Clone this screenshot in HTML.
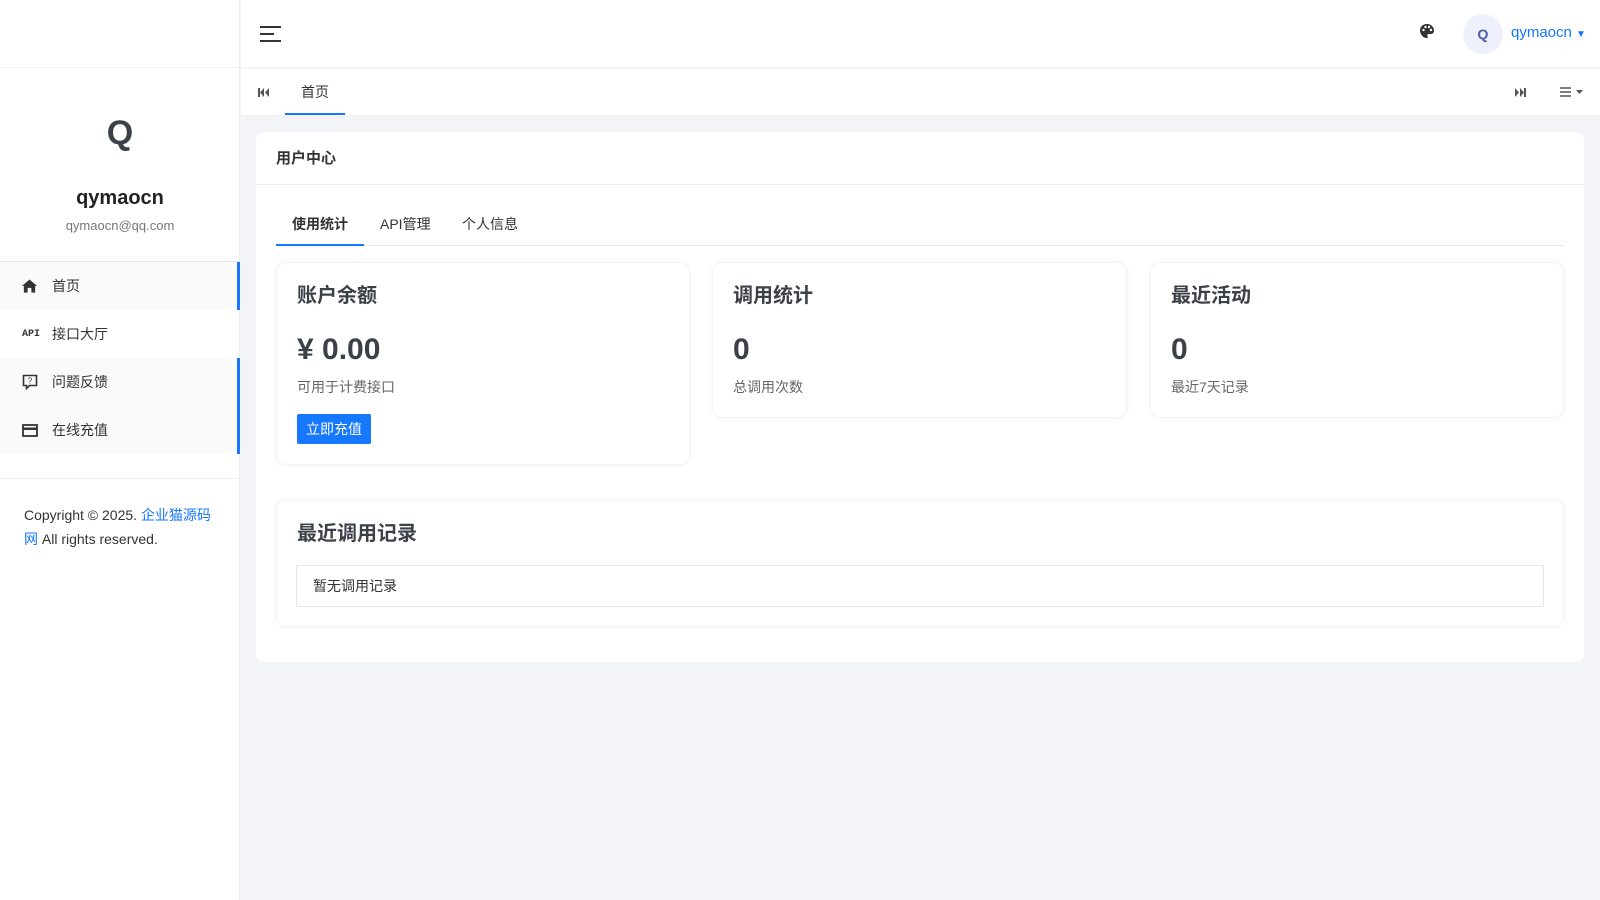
<!DOCTYPE html>
<html><head><meta charset="utf-8"><style>
*{box-sizing:border-box;margin:0;padding:0}
body{width:1600px;height:900px;background:#f3f4f8;font-family:"Liberation Sans","Noto Sans CJK SC",sans-serif;color:#333;position:relative;overflow:hidden}
.side{position:absolute;left:0;top:0;width:240px;height:900px;background:#fff;border-right:1px solid #eceef2}
.side .top{height:68px;border-bottom:1px solid #f3f3f3}
.logo{position:absolute;top:114px;width:240px;text-align:center;font-size:34px;font-weight:bold;color:#3c4049}
.name{position:absolute;top:187px;width:240px;text-align:center;font-size:20px;font-weight:bold;color:#222}
.mail{position:absolute;top:218px;width:240px;text-align:center;font-size:13px;color:#777}
.menu{position:absolute;top:261px;left:0;width:240px;border-top:1px solid #e4e4e4}
.mi{height:48px;display:flex;align-items:center;font-size:14px;color:#333;position:relative}
.mi .ic{width:30px;margin-left:22px;display:flex;align-items:center}
.mi.bar::after{content:"";position:absolute;right:0;top:0;bottom:0;width:3px;background:#1677ff}
.mi.g{background:#fafafb}
.hr2{position:absolute;top:478px;left:0;width:240px;border-top:1px solid #eee}
.copy{position:absolute;top:503px;left:24px;width:200px;font-size:14px;line-height:24px;color:#333}
.copy a{color:#1677ff;text-decoration:none}
.hdr{position:absolute;left:241px;top:0;right:0;height:68px;background:#fff;border-bottom:1px solid #f3f3f3}
.tabs{position:absolute;left:241px;top:69px;right:0;height:46px;background:#fff}
.card{position:absolute;left:256px;top:132px;width:1328px;height:530px;background:#fff;border-radius:8px}
.ch{height:53px;border-bottom:1px solid #eee;padding-left:20px;line-height:53px;font-size:15px;font-weight:bold;color:#333}
.sc{position:absolute;background:#fff;border-radius:10px;box-shadow:0 0 6px rgba(0,0,0,.05);border:1px solid #f4f4f4}
.sc h3{position:absolute;left:20px;top:16px;font-size:20px;color:#3c4049}
.sc .big{position:absolute;left:20px;top:70px;font-size:30px;font-weight:bold;color:#3c4049}
.sc .sub{position:absolute;left:20px;top:114px;font-size:14px;color:#666}
</style></head><body>
<div class="side">
<div class="top"></div>
<div class="logo">Q</div>
<div class="name">qymaocn</div>
<div class="mail">qymaocn@qq.com</div>
<div class="menu">
<div class="mi g bar"><span class="ic"><svg width="15" height="14" viewBox="0 0 16 14"><path d="M8 0L0 7h2v7h4V9h4v5h4V7h2z" fill="#333"/></svg></span>首页</div>
<div class="mi"><span class="ic" style="font-size:10px;font-weight:bold;font-family:'Liberation Mono',monospace">API</span>接口大厅</div>
<div class="mi g bar"><span class="ic"><svg width="16" height="16" viewBox="0 0 16 16"><path d="M1.5 1.5h13v10h-7l-3 3v-3h-3z" fill="none" stroke="#333" stroke-width="1.6"/><text x="8" y="9.5" font-size="8" text-anchor="middle" fill="#333" font-family="Liberation Sans">?</text></svg></span>问题反馈</div>
<div class="mi g bar"><span class="ic"><svg width="16" height="13" viewBox="0 0 16 13"><rect x="1" y="1" width="14" height="11" fill="none" stroke="#333" stroke-width="1.8"/><rect x="1" y="3.5" width="14" height="2.5" fill="#333"/></svg></span>在线充值</div>
</div>
<div class="hr2"></div>
<div class="copy">Copyright © 2025. <a>企业猫源码网</a> All rights reserved.</div>
</div>
<div class="hdr">
<svg style="position:absolute;left:19px;top:26px" width="21" height="16" viewBox="0 0 21 16"><path d="M0 1h21M0 8h14M0 15h21" stroke="#333" stroke-width="2"/></svg>
<svg style="position:absolute;left:1178px;top:23px" width="16" height="16" viewBox="0 0 16 16"><path d="M8 1C3.5 1 1 4 1 7.5S4 15 7.5 15c1.5 0 1.6-1 1-2s0-2 1.5-2H12c2 0 3-1.5 3-3.5C15 4 12 1 8 1z" fill="#333"/><circle cx="4.5" cy="7" r="1.2" fill="#fff"/><circle cx="6.5" cy="4" r="1.2" fill="#fff"/><circle cx="10" cy="4" r="1.2" fill="#fff"/><circle cx="12" cy="7" r="1.2" fill="#fff"/></svg>
<div style="position:absolute;left:1222px;top:14px;width:40px;height:40px;border-radius:50%;background:#eef1fb;color:#4a5aa8;font-weight:bold;font-size:14px;text-align:center;line-height:40px">Q</div>
<div style="position:absolute;left:1270px;top:24px;font-size:15px;color:#1677ff">qymaocn <span style="font-size:10px">▼</span></div>
</div>
<div class="tabs">
<svg style="position:absolute;left:17px;top:19px" width="11" height="9" viewBox="0 0 11 9"><rect x="0" y="0" width="2" height="9" fill="#555"/><path d="M6 0v9L2 4.5zM11 0v9L7 4.5z" fill="#555"/></svg>
<div style="position:absolute;left:44px;top:0;width:60px;height:46px;border-bottom:2px solid #1677ff;text-align:center;line-height:46px;font-size:14px;color:#333">首页</div>
<svg style="position:absolute;left:1274px;top:19px" width="11" height="9" viewBox="0 0 11 9"><path d="M0 0v9l4-4.5zM5 0v9l4-4.5z" fill="#555"/><rect x="9" y="0" width="2" height="9" fill="#555"/></svg>
<svg style="position:absolute;left:1319px;top:18px" width="24" height="10" viewBox="0 0 24 10"><path d="M0 1h11M0 5h11M0 9h11" stroke="#555" stroke-width="1.4"/><path d="M16 3h7l-3.5 4z" fill="#555"/></svg>
</div>
<div class="card">
<div class="ch">用户中心</div>
<div style="position:absolute;left:20px;top:113px;right:20px;border-bottom:1px solid #e8e8e8"></div>
<div style="position:absolute;left:20px;top:80px;width:88px;height:34px;border-bottom:2px solid #1677ff;text-align:center;font-size:14px;font-weight:bold;line-height:24px">使用统计</div>
<div style="position:absolute;left:124px;top:80px;font-size:14px;line-height:24px">API管理</div>
<div style="position:absolute;left:206px;top:80px;font-size:14px;line-height:24px">个人信息</div>
<div class="sc" style="left:20px;top:130px;width:414px;height:203px"><h3>账户余额</h3><div class="big">¥ 0.00</div><div class="sub">可用于计费接口</div>
<div style="position:absolute;left:20px;top:151px;width:74px;height:30px;background:#1677ff;color:#fff;font-size:14px;text-align:center;line-height:30px;border-radius:2px">立即充值</div></div>
<div class="sc" style="left:456px;top:130px;width:415px;height:156px"><h3>调用统计</h3><div class="big">0</div><div class="sub">总调用次数</div></div>
<div class="sc" style="left:894px;top:130px;width:414px;height:156px"><h3>最近活动</h3><div class="big">0</div><div class="sub">最近7天记录</div></div>
<div class="sc" style="left:20px;top:368px;width:1288px;height:127px"><h3>最近调用记录</h3>
<div style="position:absolute;left:19px;top:64px;right:19px;height:42px;border:1px solid #e6e6e6;border-radius:2px;padding-left:16px;line-height:40px;font-size:14px">暂无调用记录</div></div>
</div>
</body></html>
